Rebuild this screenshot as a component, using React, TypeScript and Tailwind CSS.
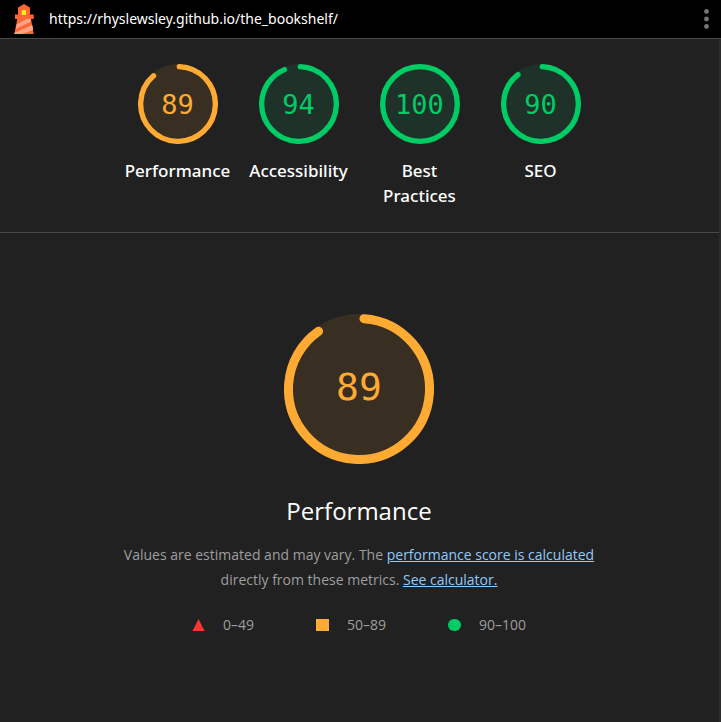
type GaugeProps = {
  score: number;
  tone: "average" | "pass";
  start: number;
  sweep: number;
  large?: boolean;
};

const tones = {
  average: { stroke: "#ffaa33", fill: "#382e22", text: "text-[#ffaa33]" },
  pass: { stroke: "#00cc66", fill: "#1e3229", text: "text-[#00cc66]" },
};

function Gauge({ score, tone, start, sweep, large }: GaugeProps) {
  const t = tones[tone];
  const width = large ? 7.2 : 8;
  const r = 60 - width / 2;
  return (
    <div className={`grid place-items-center ${large ? "size-[150px]" : "size-20"}`}>
      <svg viewBox="0 0 120 120" className="col-start-1 row-start-1 size-full" aria-hidden="true">
        <circle cx="60" cy="60" r="60" fill={t.fill} />
        <circle
          cx="60"
          cy="60"
          r={r}
          fill="none"
          stroke={t.stroke}
          strokeWidth={width}
          strokeLinecap="round"
          pathLength={360}
          strokeDasharray={sweep >= 360 ? undefined : `${sweep} 360`}
          transform={`rotate(${start - 90} 60 60)`}
        />
      </svg>
      <span
        className={`col-start-1 row-start-1 font-['DejaVu_Sans_Mono',monospace] ${t.text} ${
          large ? "pb-1 text-[38px] leading-[44px]" : "pt-0.5 text-[27px] leading-8"
        }`}
      >
        {score}
      </span>
    </div>
  );
}

const categories: (GaugeProps & { label: string })[] = [
  { label: "Performance", score: 89, tone: "average", start: 2, sweep: 317 },
  { label: "Accessibility", score: 94, tone: "pass", start: 2, sweep: 335 },
  { label: "Best Practices", score: 100, tone: "pass", start: 0, sweep: 360 },
  { label: "SEO", score: 90, tone: "pass", start: 2, sweep: 320 },
];

function Lighthouse() {
  return (
    <svg viewBox="0 0 22 32" className="h-8 w-[22px]" aria-hidden="true">
      <path d="M11 1 17 4.500V11.500h3.700V16H18L20.700 31H1.300L4.300 16H2v-4.500h3v-7z" fill="#ff6633" />
      <path d="M8.700 7H13v5H8.700z" fill="#ffee22" />
      <path d="M3.600 21.500 13.500 16H17.500l.5 2.500L2.900 26zM1.500 29.800 19.300 22l.8 5L9 31H1.300z" fill="#ffa385" />
    </svg>
  );
}

export default function App() {
  return (
    <div className="min-h-screen border-r-2 border-[#2b2b2b] bg-[#212121] font-['Open_Sans','Noto_Sans',sans-serif] text-white">
      <header className="-mr-0.5 flex h-[39px] items-center border-b border-[#494949] bg-black pl-[13px]">
        <Lighthouse />
        <a
          href="https://rhyslewsley.github.io/the_bookshelf/"
          className="ml-3.5 font-['Noto_Sans',sans-serif] text-sm leading-5"
        >
          https://rhyslewsley.github.io/the_bookshelf/
        </a>
        <button type="button" aria-label="Tools menu" className="ml-auto px-3">
          <svg viewBox="0 0 5 20" className="h-5 w-[5px]" fill="#757575">
            <circle cx="2.500" cy="2.500" r="2.400" />
            <circle cx="2.500" cy="10" r="2.400" />
            <circle cx="2.500" cy="17.500" r="2.400" />
          </svg>
        </button>
      </header>

      <nav className="flex justify-center border-b border-[#494949] pt-[25px] pr-px pb-6">
        {categories.map(({ label, ...gauge }) => (
          <a key={label} href="#performance" className="flex w-[121px] flex-col items-center px-2">
            <Gauge {...gauge} />
            <span className="mt-3.5 text-center font-['Noto_Sans',sans-serif] text-[17px] leading-[25px] font-medium">
              {label}
            </span>
          </a>
        ))}
      </nav>

      <main id="performance" className="flex flex-col items-center pt-[81px] pr-px pb-10">
        <Gauge score={89} tone="average" start={4} sweep={321} large />
        <h1 className="mt-[27px] text-2xl leading-10">Performance</h1>
        <p className="mt-[11px] max-w-[520px] text-center text-sm leading-[25px] text-[#9e9e9e]">
          Values are estimated and may vary. The{" "}
          <a href="#score" className="text-[#90caf9] underline">
            performance score is calculated
          </a>{" "}
          directly from these metrics.{" "}
          <a href="#calculator" className="text-[#90caf9] underline">
            See calculator.
          </a>
        </p>
        <ul className="mt-5 flex gap-[62px] text-sm leading-[25px] text-[#9e9e9e]">
          <li className="flex items-center gap-[18px]">
            <svg viewBox="0 0 13 12" className="h-3 w-[13px]" aria-hidden="true">
              <path d="M6.500 0 12.500 12H.5z" fill="#ff3333" />
            </svg>
            0–49
          </li>
          <li className="flex items-center gap-[18px]">
            <span className="h-3 w-[13px] bg-[#ffaa33]" />
            50–89
          </li>
          <li className="flex items-center gap-[18px]">
            <span className="h-3 w-[13px] rounded-full bg-[#00cc66]" />
            90–100
          </li>
        </ul>
      </main>
    </div>
  );
}
